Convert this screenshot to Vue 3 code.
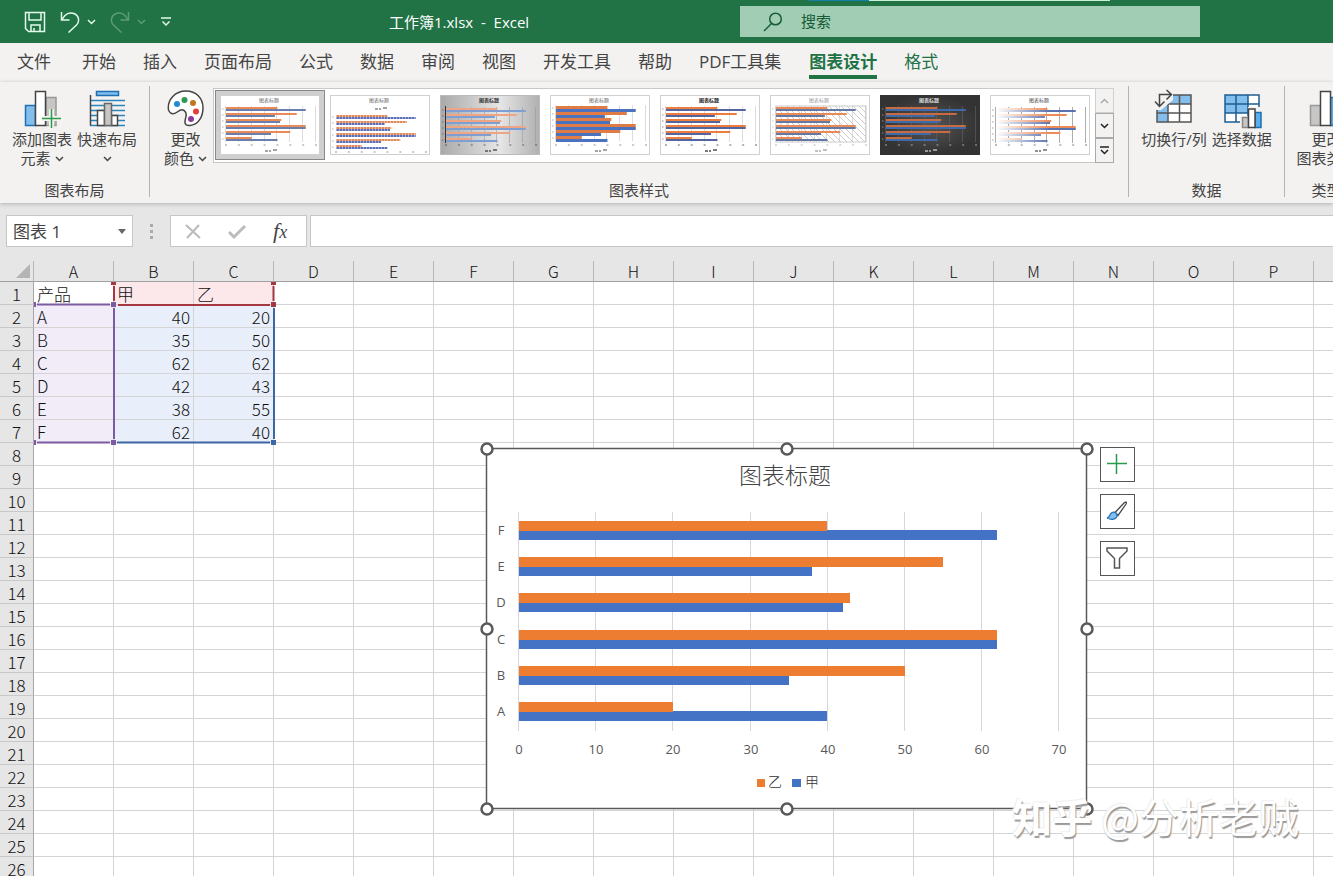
<script setup>
import { ref } from 'vue'

const tabs = ['文件', '开始', '插入', '页面布局', '公式', '数据', '审阅', '视图', '开发工具', '帮助', 'PDF工具集', '图表设计', '格式']
const search = ref('')
const nameBox = ref('图表 1')
const formula = ref('')

const columns = 'ABCDEFGHIJKLMNOPQ'.split('')
const rowCount = 26
const data = [
  ['产品', '甲', '乙'],
  ['A', 40, 20],
  ['B', 35, 50],
  ['C', 62, 62],
  ['D', 42, 43],
  ['E', 38, 55],
  ['F', 62, 40],
]
const cell = (r, c) => data[r - 1]?.[c] ?? ''
const cellClass = (r, c) => ({
  num: typeof cell(r, c) === 'number',
  red: r === 1 && (c === 1 || c === 2),
  purple: r > 1 && r < 8 && c === 0,
  blue: r > 1 && r < 8 && (c === 1 || c === 2),
})

const bars = data.slice(1).reverse()
const ticks = [0, 10, 20, 30, 40, 50, 60, 70]
const barY = (i) => Math.round(72 + i * 36.2)
const handles = [[0, 0], [300, 0], [600, 0], [0, 180], [600, 180], [0, 360], [300, 360], [600, 360]]

const base = { bg: '#fff', frame: '#d0d0d0', o: '#e98a57', b: '#5a7cc0', grid: '#c4c4c4', text: '#666', top: 12, pitch: 6, h: 2, legendY: 56, tickY: 50, bold: 400 }
const styles = [
  { ...base, b: '#6a7fae' },
  { ...base, grid: 'none', top: 20, legendY: 14, tickY: 57, hatch: true, o: '#e08a5c', b: '#5d6fb8' },
  { ...base, bg: 'url(#silver)', frame: '#bbb', o: '#eea584', b: '#7d9fd4', grid: '#999', axis: '#333', top: 13, text: '#333', bold: 700 },
  { ...base, o: '#df7b45', b: '#4a72be', top: 11, h: 3 },
  { ...base, o: '#ec7d3c', b: '#53659c', text: '#222', bold: 700 },
  { ...base, diagonal: true, b: '#6478a4', text: '#999' },
  { ...base, bg: 'url(#night)', frame: '#333', o: '#c66c42', b: '#3f69a9', grid: '#626262', text: '#ddd', bold: 700 },
  { ...base, grid: '#777', top: 13, fade: true, o: 'url(#fadeO)', b: 'url(#fadeB)', text: '#444' },
]
</script>

<template>
  <div class="excel">
    <header class="titlebar">
      <div class="accent"><i></i><b></b></div>
      <div class="quick">
        <button class="save" aria-label="保存"><svg width="22" height="22" viewBox="0 0 22 22"><path d="M1.500 1.500h19v19h-16l-3-3zM5 1.500v7.500h12V1.500M7 20v-6h9v6M10 20v-3" /></svg></button>
        <button class="undo" aria-label="撤消"><svg width="20" height="22" viewBox="0 0 20 22"><path d="M1.500 1v8h8M2 8.500C5 2.500 10 1 14 2.500c5 2 6 8 2.500 11.500L8.500 21.500" /></svg></button>
        <button class="drop" aria-label="撤消列表"><svg width="9" height="6" viewBox="0 0 9 6"><path d="M1 1l3.500 3.500L8 1" /></svg></button>
        <button class="redo faded" aria-label="恢复"><svg width="20" height="22" viewBox="0 0 20 22"><path d="M18.500 1v8h-8M18 8.500C15 2.500 10 1 6 2.500c-5 2-6 8-2.500 11.500l8 7.500" /></svg></button>
        <button class="drop faded" aria-label="恢复列表"><svg width="9" height="6" viewBox="0 0 9 6"><path d="M1 1l3.500 3.500L8 1" /></svg></button>
        <button class="custom" aria-label="自定义快速访问工具栏"><svg width="10" height="10" viewBox="0 0 10 10"><path d="M0 1h10M1.500 4.500L5 8l3.500-3.500" /></svg></button>
      </div>
      <h1>工作簿1.xlsx&nbsp; -&nbsp; Excel</h1>
      <label class="search">
        <svg width="20" height="20" viewBox="0 0 20 20"><circle cx="12.500" cy="7" r="5.800" /><path d="M8.500 11.500L1 19" /></svg>
        <input v-model="search" placeholder="搜索" aria-label="搜索" />
      </label>
    </header>

    <nav class="tabs">
      <button v-for="t in tabs" :key="t" :class="{ active: t === '图表设计', context: t === '格式' }">{{ t }}</button>
    </nav>

    <section class="ribbon">
      <div class="group layout">
        <div class="tools">
          <button class="tool">
            <svg width="38" height="40" viewBox="0 0 38 40">
              <path d="M2.500 16.500h10v20h-10z" fill="#83beec" stroke="#1e6fb4" stroke-width="1.500" />
              <path d="M23 8.500h10v28H23z" fill="#c8c6c4" stroke="#999" stroke-width="1.500" />
              <path d="M12.500 2.500h10v34h-10z" fill="#fff" stroke="#444" stroke-width="1.500" />
              <path d="M28.500 20v19M19 29.500h19" stroke="#f3f2f1" stroke-width="5" /><path d="M28.500 20v19M19 29.500h19" stroke="#2c9a4b" stroke-width="1.500" />
            </svg>
            <span>添加图表</span><span>元素 <svg class="chev" width="9" height="6" viewBox="0 0 9 6"><path d="M1 1l3.500 3.500L8 1" /></svg></span>
          </button>
          <button class="tool">
            <svg width="38" height="40" viewBox="0 0 38 40">
              <path d="M2 11.500h35M2 16.500h35M2 21.500h35M2 26.500h35M2 31.500h35M2 36.500h35" stroke="#2c83bd" stroke-width="1.500" />
              <path d="M8.500 2.500h22v4h-22z" fill="#83beec" stroke="#1e6fb4" stroke-width="1.500" />
              <path d="M2.500 6v30.500" stroke="#444" stroke-width="1.500" />
              <path d="M9.500 21.500h7v15h-7zM23.500 26.500h6v10h-6z" fill="#fff" stroke="#444" stroke-width="1.500" /><path d="M16.500 14.500h7v22h-7z" fill="#c8c6c4" stroke="#666" stroke-width="1.500" />
            </svg>
            <span>快速布局</span><span><svg class="chev" width="9" height="6" viewBox="0 0 9 6"><path d="M1 1l3.500 3.500L8 1" /></svg></span>
          </button>
        </div>
        <h2>图表布局</h2>
      </div>

      <div class="group styles">
        <div class="tools">
          <button class="tool colors">
            <svg width="38" height="40" viewBox="0 0 38 40">
              <path d="M1.500 21C0 11 8 2 19 2c10 0 17 7 17 17 0 9-5 17-13 17.500-7 .500-5-5-4-9 1-5-3-9-8-5-3 2.500-7 4-9.500-1.500z" fill="#fff" stroke="#444" stroke-width="1.500" />
              <circle cx="10" cy="15" r="3" fill="#2589cf" /><circle cx="17.500" cy="11" r="3" fill="#2b9a50" /><circle cx="26" cy="14" r="3" fill="#c1761b" /><circle cx="29" cy="22.500" r="3" fill="#e23f36" /><circle cx="24" cy="30" r="3" fill="#893a9b" />
            </svg>
            <span>更改</span><span>颜色 <svg class="chev" width="9" height="6" viewBox="0 0 9 6"><path d="M1 1l3.500 3.500L8 1" /></svg></span>
          </button>
          <div class="gallery">
            <button v-for="(s, k) in styles" :key="k" class="thumb" :class="{ selected: k === 0 }" :aria-label="'样式 ' + (k + 1)">
              <svg width="100" height="60" viewBox="0 0 100 60">
                <defs v-if="k === 0">
                  <linearGradient id="silver" x1="0" y1="0" x2="1" y2="0"><stop offset="0" stop-color="#a9a9a9" /><stop offset=".6" stop-color="#e6e6e6" /><stop offset="1" stop-color="#b0b0b0" /></linearGradient>
                  <radialGradient id="night"><stop offset="0" stop-color="#555" /><stop offset="1" stop-color="#333" /></radialGradient>
                  <linearGradient id="fadeO" gradientUnits="userSpaceOnUse" x1="6" y1="0" x2="60" y2="0"><stop offset="0" stop-color="#fff" /><stop offset="1" stop-color="#ec8a58" /></linearGradient>
                  <linearGradient id="fadeB" gradientUnits="userSpaceOnUse" x1="6" y1="0" x2="60" y2="0"><stop offset="0" stop-color="#fff" /><stop offset="1" stop-color="#5a72b0" /></linearGradient>
                  <pattern id="diag" width="6" height="6" patternUnits="userSpaceOnUse"><path d="M0 0l6 6" stroke="#ccc" stroke-width="1" /></pattern>
                  <pattern id="ticks" width="3" height="4" patternUnits="userSpaceOnUse"><path d="M.5 0v4" stroke="#fff" stroke-width="1" stroke-opacity=".4" /></pattern>
                </defs>
                <rect x=".5" y=".5" width="99" height="59" :fill="s.bg" :stroke="s.frame" />
                <rect v-if="s.diagonal" x="6" y="11" width="90" height="36" fill="url(#diag)" stroke="#ccc" />
                <path v-for="n in 8" :key="n" :d="`M${Math.round(6 + (n - 1) * 12.86) - 0.5} ${s.top - 1}v36`" :stroke="s.grid" stroke-width="1" stroke-opacity=".6" />
                <g v-for="(r, i) in bars" :key="r[0]">
                  <rect x="6" :y="s.top + i * s.pitch" :width="r[2] * 1.286" :height="s.h" :fill="s.o" />
                  <rect x="6" :y="s.top + i * s.pitch + s.h" :width="r[1] * 1.286" :height="s.h" :fill="s.b" />
                  <path :d="`M2 ${s.top + i * s.pitch + 2}h1.500`" :stroke="s.text" stroke-opacity=".5" />
                </g>
                <rect v-if="s.hatch" x="6" y="19" width="80" height="35" fill="url(#ticks)" />
                <path v-if="s.axis" d="M5.500 11v37" :stroke="s.axis" />
                <path v-for="n in 8" :key="'t' + n" :d="`M${5 + (n - 1) * 12.86} ${s.tickY}h2`" :stroke="s.text" stroke-width="1" stroke-opacity=".7" />
                <text x="49" y="7" text-anchor="middle" font-size="5" :font-weight="s.bold" :fill="s.text">图表标题</text>
                <path :d="`M45 ${s.legendY}h3m1 0h2m2-1h4`" :stroke="s.text" stroke-width="2" stroke-opacity=".6" />
              </svg>
            </button>
          </div>
          <div class="scroller">
            <button class="dim" aria-label="上一行"><svg width="9" height="6" viewBox="0 0 9 6"><path d="M1 5l3.500-3.500L8 5" /></svg></button>
            <button aria-label="下一行"><svg width="9" height="6" viewBox="0 0 9 6"><path d="M1 1l3.500 3.500L8 1" /></svg></button>
            <button aria-label="其他样式"><svg width="9" height="9" viewBox="0 0 9 9"><path d="M0 1h9M1 4l3.500 3.500L8 4" /></svg></button>
          </div>
        </div>
        <h2>图表样式</h2>
      </div>

      <div class="group dataset">
        <div class="tools">
          <button class="tool">
            <svg width="40" height="40" viewBox="0 0 40 40">
              <path d="M3 6h34v27H3z" fill="#fff" /><path d="M3 6h34v9H14v18H3z" fill="#83beec" />
              <path d="M3 6h34v27H3zM3 15h34M3 24h34M14 6v27M25.500 6v27" fill="none" stroke="#555" stroke-width="1.500" />
              <path d="M0 0h19v11L7 21H0z" fill="#f3f2f1" />
              <path d="M5.500 17.500V5.500h12M1 12.500l4.500 5 5-5M12.500 1l5 4.500-5 5" fill="none" stroke="#444" stroke-width="1.500" />
            </svg>
            <span>切换行/列</span>
          </button>
          <button class="tool">
            <svg width="40" height="40" viewBox="0 0 40 40">
              <path d="M3 6h34v27H3z" fill="#fff" /><path d="M3 6h23v18H3z" fill="#83beec" />
              <path d="M3 6h34v27H3zM3 15h34M3 24h34M14 6v27M26 6v27" fill="none" stroke="#1d5d91" stroke-width="1.500" />
              <path d="M18 27h8v-9h14v22H18z" fill="#f3f2f1" />
              <path d="M20.500 28.500h6v10h-6z" fill="#c8c6c4" stroke="#888" stroke-width="1.500" /><path d="M33 23.500h6v15h-6z" fill="#5aaeea" stroke="#1e6fb4" stroke-width="1.500" /><path d="M26.500 20h6.500v18.500h-6.500z" fill="#fff" stroke="#444" stroke-width="1.500" />
            </svg>
            <span>选择数据</span>
          </button>
        </div>
        <h2>数据</h2>
      </div>

      <div class="group kind">
        <div class="tools">
          <button class="tool">
            <svg width="38" height="40" viewBox="0 0 38 40">
              <path d="M3.500 16.500h10v20h-10z" fill="#c8c6c4" stroke="#999" stroke-width="1.500" /><path d="M23.500 8.500h10v28h-10z" fill="#5aaeea" stroke="#1e6fb4" stroke-width="1.500" /><path d="M13.500 2.500h10v34h-10z" fill="#fff" stroke="#444" stroke-width="1.500" />
            </svg>
            <span>更改</span><span>图表类型</span>
          </button>
        </div>
        <h2>类型</h2>
      </div>
    </section>

    <section class="formula">
      <div class="namebox">
        <input v-model="nameBox" aria-label="名称框" />
        <button aria-label="名称列表"><svg width="8" height="5" viewBox="0 0 8 5"><path d="M0 0h8L4 5z" fill="#666" /></svg></button>
      </div>
      <svg class="dots" width="3" height="16" viewBox="0 0 3 16"><path d="M0 1h3v3H0zM0 7h3v3H0zM0 13h3v3H0z" fill="#aaa" /></svg>
      <div class="actions">
        <button aria-label="取消"><svg width="18" height="18" viewBox="0 0 18 18"><path d="M2 3l14 13M15 3L3 16" fill="none" stroke="#bbb" stroke-width="2" /></svg></button>
        <button aria-label="输入"><svg width="18" height="18" viewBox="0 0 18 18"><path d="M1 10l5 5L17 4" fill="none" stroke="#bbb" stroke-width="3" /></svg></button>
        <button class="fx" aria-label="插入函数">f<small>x</small></button>
      </div>
      <input v-model="formula" class="entry" aria-label="编辑栏" />
    </section>

    <main class="sheet">
      <table>
        <thead>
          <tr>
            <th class="corner"><svg width="14" height="14" viewBox="0 0 14 14"><path d="M14 0v14H0z" fill="#b4b4b4" /></svg></th>
            <th v-for="c in columns" :key="c" scope="col">{{ c }}</th>
          </tr>
        </thead>
        <tbody>
          <tr v-for="r in rowCount" :key="r">
            <th scope="row">{{ r }}</th>
            <td v-for="(c, i) in columns" :key="c" :class="cellClass(r, i)">{{ cell(r, i) }}</td>
          </tr>
        </tbody>
      </table>

      <svg class="ranges" width="280" height="188" viewBox="0 0 280 188">
        <path d="M114 25v15M118 44h152M273.500 25v15" stroke="#a4373f" stroke-width="2" fill="none" />
        <path d="M37 43.500h73M114 47v131M37 181.500h73" stroke="#7c5ba0" stroke-width="2" fill="none" />
        <path d="M117 181.500h153M274 47v131" stroke="#3c66a6" stroke-width="2" fill="none" />
        <path d="M111 21h5v3h-5zM271 21h5v3h-5zM271 41h5v5h-5z" fill="#a4373f" />
        <path d="M34 41h2v5h-2zM111 41h5v5h-5zM34 179h2v5h-2zM111 179h5v5h-5z" fill="#7c5ba0" />
        <path d="M271 179h5v5h-5z" fill="#3c66a6" />
      </svg>

      <svg class="chart" width="614" height="374" viewBox="-7 -7 614 374" role="img" aria-label="图表标题">
        <rect x="-.5" y="-.5" width="600" height="360" fill="#fff" stroke="#595959" stroke-width="1.500" />
        <text x="298" y="35" class="title">图表标题</text>
        <g v-for="t in ticks" :key="t">
          <path :d="`M${Math.round(32 + t * 7.72) - 0.5} 63v219`" stroke="#d6d6dc" />
          <text :x="Math.round(32 + t * 7.72)" y="305" class="label">{{ t }}</text>
        </g>
        <g v-for="(r, i) in bars" :key="r[0]">
          <text x="14" :y="barY(i) + 14" class="label">{{ r[0] }}</text>
          <rect x="32" :y="barY(i) + 9" :width="Math.floor(r[1] * 7.72)" height="10" fill="#4472c4" />
          <rect x="32" :y="barY(i)" :width="Math.floor(r[2] * 7.72)" height="10" fill="#ed7d31" />
        </g>
        <path d="M270 330h8v8h-8z" fill="#ed7d31" /><text x="281" y="338" class="legend">乙</text>
        <path d="M305 330h9v8h-9z" fill="#4472c4" /><text x="318" y="338" class="legend">甲</text>
        <circle v-for="h in handles" :key="h.join()" :cx="h[0]" :cy="h[1]" r="5.500" fill="#fff" stroke="#595959" stroke-width="2.500" />
      </svg>

      <div class="side">
        <button aria-label="图表元素"><svg width="24" height="24" viewBox="0 0 24 24"><path d="M10.500 1v20M1 10.500h20" stroke="#2c9a4b" stroke-width="1.500" /></svg></button>
        <button aria-label="图表样式"><svg width="24" height="24" viewBox="0 0 24 24"><path d="M9 12.500L18 3c2-1.500 3-1 2 1l-8 11.500z" fill="#fff" stroke="#444" stroke-width="1.300" /><path d="M1 18c3 0 2-4 5-5.500 3-1 6 1 5 4-1.500 3.500-6 3.500-10 1.500z" fill="#83beec" stroke="#1e6fb4" stroke-width="1.300" /></svg></button>
        <button aria-label="图表筛选器"><svg width="24" height="24" viewBox="0 0 24 24"><path d="M1 1h20v3l-7.500 7.500V21h-5v-9.500L1 4z" fill="#fff" stroke="#555" stroke-width="1.500" /></svg></button>
      </div>
    </main>
    <div class="mark"><b>知乎</b> @分析老贼</div>
  </div>
</template>

<style>
html, body { margin: 0; overflow: hidden; }
</style>

<style scoped>
.excel { position: relative; display: flex; flex-direction: column; height: 100vh; overflow: hidden; background: #e6e6e6; font-family: "Open Sans", "Noto Sans CJK SC", sans-serif; font-size: 15px; color: #444; }
button { display: flex; align-items: center; justify-content: center; border: 0; padding: 0; background: none; font: inherit; color: inherit; white-space: nowrap; }
input { min-width: 0; border: 0; padding: 0; outline: 0; background: none; font: inherit; color: inherit; }
h1, h2 { margin: 0; font-size: 15px; font-weight: 400; }
svg { display: block; flex: none; }

.titlebar { position: relative; display: grid; grid-template-columns: 389px 351px minmax(200px, 460px) 1fr; flex: none; align-items: center; height: 43px; background: #217346; color: #fff; }
.accent { position: absolute; top: 0; left: 808px; display: flex; height: 1px; }
.accent i { width: 61px; background: #1480a8; }
.accent b { width: 241px; background: #c9f0d8; }
.quick { display: flex; align-items: center; padding-left: 24px; }
.quick path { fill: none; stroke: #e2fbea; stroke-width: 1.500px; }
.quick button { height: 24px; }
.undo, .redo { margin-left: 14px; }
.drop { margin-left: 7px; }
.custom { margin-left: 15px; }
.faded { opacity: .3; }
.search { display: flex; align-items: center; gap: 18px; height: 31px; padding-left: 23px; background: #a0cdb4; color: #175c35; }
.search svg { fill: none; stroke: #175c35; stroke-width: 1.500px; }
.search input { flex: 1; height: 29px; padding-bottom: 2px; }
.search input::placeholder { color: #175c35; opacity: 1; }

.tabs { display: flex; flex: none; gap: 27px; height: 39px; padding-left: 17px; background: #f3f2f1; font-size: 17px; }
.tabs button { height: 36px; box-sizing: border-box; padding-bottom: 1px; border-bottom: 4px solid transparent; border-top: 4px solid transparent; }
.tabs button:first-child { margin-right: 4px; }
.tabs .active { margin-left: 1px; border-bottom-color: #217346; color: #217346; font-weight: 700; }
.tabs .context { color: #217346; }

.ribbon { display: flex; flex: none; height: 121px; overflow: hidden; background: #f3f2f1; box-shadow: 0 1px 4px #b0b0b0; }
.group { display: flex; flex: none; flex-direction: column; align-items: center; justify-content: space-between; height: 111px; margin-top: 4px; box-sizing: border-box; border-right: 1px solid #b3b3b3; }
.layout { width: 150px; }
.styles { width: 979px; }
.dataset { width: 156px; }
.kind { width: 84px; }
.group h2 { line-height: 14px; }
.tools { display: flex; gap: 5px; }
.styles .tools { gap: 0; margin-right: 2px; }
.tool { flex-direction: column; justify-content: flex-start; margin-top: 3px; }
.tool svg { margin-bottom: 1px; }
.tool span { display: flex; align-items: center; gap: 4px; height: 19px; line-height: 19px; }
.tool .chev { margin: 0; }
.chev path { fill: none; stroke: #444; stroke-width: 1.500px; }
.colors { width: 46px; margin-right: 4px; }
.gallery { display: flex; height: 75px; box-sizing: border-box; margin-top: 2px; padding-left: 1px; border: 1px solid #c8c8c8; border-right: 0; background: #fff; }
.thumb { width: 110px; height: 70px; margin-top: 1px; }
.thumb.selected { box-sizing: border-box; border: 1px solid #888; background: #cfcfcf; }
.scroller { display: flex; flex-direction: column; width: 19px; height: 75px; margin-top: 2px; }
.scroller button { flex: 1; box-sizing: border-box; border: 1px solid #aaa; }
.scroller path { fill: none; stroke: #222; stroke-width: 1.500px; }
.scroller .dim { border-color: #d0d0d0; }
.scroller .dim path { stroke: #aaa; }

.formula { display: flex; flex: none; align-items: center; height: 32px; padding: 12px 0 14px 6px; }
.namebox, .actions, .entry { display: flex; height: 32px; box-sizing: border-box; border: 1px solid #c6c6c6; background: #fff; }
.namebox { width: 127px; padding: 0 6px; font-size: 17px; }
.namebox input { flex: 1; width: 80px; padding-bottom: 2px; }
.dots { margin: 0 17px; }
.actions { width: 137px; padding: 0 4px 0 0; }
.actions button { flex: 1; }
.actions .fx { align-items: baseline; font: italic 400 22px "Liberation Serif", serif; line-height: 30px; color: #444; }
.fx small { font-size: 18px; }
.entry { flex: 1; margin-left: 3px; border-right: 0; }

.sheet { position: relative; flex: 1; overflow: hidden; background: #fff; font-family: "Noto Sans CJK SC", sans-serif; }
table { width: 1394px; table-layout: fixed; border-spacing: 0; color: #111; font-size: 17px; font-weight: 300; line-height: 20px; }
th { height: 21px; padding: 1px 0 0; border-right: 1px solid #a6a6a6; border-bottom: 1px solid #c8c8c8; background: #e6e6e6; font-weight: 300; }
thead th { width: 79px; height: 20px; padding: 0; border-right-color: #b8b8b8; border-bottom-color: #a0a0a0; font-size: 16px; }
thead .corner { width: 33px; }
.corner svg { margin-left: 16px; }
td { height: 21px; padding: 1px 3px 0; border-right: 1px solid #d4d4d4; border-bottom: 1px solid #d4d4d4; overflow: hidden; }
.num { text-align: right; }
.red { background: #fce8ea; }
.purple { background: #f2ecf9; }
.blue { background: #e9effa; }
.ranges { position: absolute; top: 0; left: 0; }
.chart { position: absolute; top: 181px; left: 480px; }
.chart text { fill: #595959; }
.chart .title { fill: #444; font-size: 23px; font-weight: 300; text-anchor: middle; }
.label { font-family: "Open Sans", sans-serif; font-size: 13px; text-anchor: middle; }
.chart .legend { font-size: 14px; font-weight: 300; fill: #333; }
.side { position: absolute; top: 186px; left: 1100px; display: flex; flex-direction: column; gap: 12px; }
.side button { width: 35px; height: 35px; box-sizing: border-box; border: 1px solid #555; background: #fff; }
.mark { position: absolute; right: 34px; bottom: 32px; color: #fff; font-family: "Noto Sans CJK SC", sans-serif; font-size: 40px; line-height: 56px; white-space: nowrap; text-shadow: 1px 2px 1px #999, -1px -1px 1px #eee; }
</style>
